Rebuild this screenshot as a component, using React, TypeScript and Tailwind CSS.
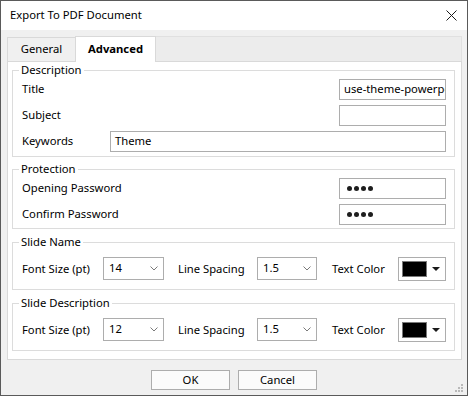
import React from 'react';

const font = { fontFamily: '"Segoe UI", "Noto Sans", "DejaVu Sans", sans-serif' };

function Chevron() {
  return (
    <svg width="8" height="5" viewBox="0 0 8 5" className="shrink-0">
      <path d="M0.5 0.5 L4 4 L7.5 0.5" fill="none" stroke="#7a7a7a" strokeWidth="1" />
    </svg>
  );
}

function Select({ value, width }: { value: string; width: string }) {
  return (
    <div className={`${width} h-[23px] border border-[#adadad] bg-white flex items-center justify-between pl-[5px] pr-[5px]`}>
      <span>{value}</span>
      <Chevron />
    </div>
  );
}

function ColorButton() {
  return (
    <div className="w-[48px] h-[24px] border border-[#adadad] bg-white flex items-center pl-[3px] gap-[5px]">
      <div className="w-[25px] h-[16px] bg-black border border-[#7a7a7a]" />
      <svg width="8" height="4" viewBox="0 0 8 4">
        <path d="M0 0 H8 L4 4 Z" fill="#1a1a1a" />
      </svg>
    </div>
  );
}

function TextBox({ value, width, children }: { value?: string; width: string; children?: React.ReactNode }) {
  return (
    <div className={`${width} h-[21px] border border-[#adadad] bg-white flex items-center pl-[4px] overflow-hidden whitespace-nowrap`}>
      {value}
      {children}
    </div>
  );
}

function Dots() {
  return (
    <div className="flex gap-[2px] pl-[3px]">
      {[0, 1, 2, 3].map((i) => (
        <span key={i} className="w-[5px] h-[5px] rounded-full bg-[#1e1e1e]" />
      ))}
    </div>
  );
}

function Group({ title, className, children }: { title: string; className: string; children: React.ReactNode }) {
  return (
    <fieldset className={`border border-[#dcdcdc] ml-[4px] w-[443px] pl-[9px] pr-[8px] ${className}`}>
      <legend className="-ml-[3px] px-[2px] leading-[16px]">{title}</legend>
      {children}
    </fieldset>
  );
}

function StyleRow({ size, className }: { size: string; className: string }) {
  return (
    <div className={`flex items-start h-[24px] ${className}`}>
      <span className="w-[81px] leading-[23px]">Font Size (pt)</span>
      <Select value={size} width="w-[61px]" />
      <span className="ml-[14px] w-[79px] leading-[23px]">Line Spacing</span>
      <Select value="1.5" width="w-[60px]" />
      <span className="ml-[15px] w-[66px] leading-[23px]">Text Color</span>
      <ColorButton />
    </div>
  );
}

export default function App() {
  return (
    <div className="relative w-[468px] h-[396px] border border-[#5a5a5a] bg-[#f0f0f0] text-[11.25px] text-black flex flex-col" style={font}>
      {/* title bar */}
      <div className="h-[29px] bg-white flex items-center justify-between pl-[9px] pr-[10px]">
        <span>Export To PDF Document</span>
        <svg width="11" height="11" viewBox="0 0 11 11">
          <path d="M0.5 0.5 L10.5 10.5 M10.5 0.5 L0.5 10.5" stroke="#1a1a1a" strokeWidth="1" />
        </svg>
      </div>

      {/* tabs */}
      <div className="ml-[6px] mt-[6px] w-[455px]">
        <div className="flex items-end h-[25px]">
          <div className="w-[69px] h-[24px] border border-b-0 border-[#d9d9d9] bg-[#f0f0f0] flex items-center justify-center">
            General
          </div>
          <div className="relative z-10 -ml-px -mb-px w-[81px] h-[26px] border border-b-0 border-[#d9d9d9] bg-white flex items-center justify-center font-bold">
            Advanced
          </div>
          <div className="flex-1 h-[25px] border-t border-r border-[#e0e0e0] bg-[#ececec]" />
        </div>
        <div className="h-[299px] border border-[#d9d9d9] bg-white">
          <Group title="Description" className="pb-[4px]">
            <div className="flex flex-col gap-[5px] mt-[1px]">
              <div className="flex items-center h-[21px]">
                <span>Title</span>
                <TextBox value="use-theme-powerpoint-template" width="ml-auto w-[107px]" />
              </div>
              <div className="flex items-center h-[21px]">
                <span>Subject</span>
                <TextBox width="ml-auto w-[107px]" />
              </div>
              <div className="flex items-center h-[21px]">
                <span className="w-[88px]">Keywords</span>
                <TextBox value="Theme" width="flex-1" />
              </div>
            </div>
          </Group>

          <Group title="Protection" className="mt-[4px] pb-[3px]">
            <div className="flex flex-col gap-[5px] mt-[1px]">
              <div className="flex items-center h-[21px]">
                <span>Opening Password</span>
                <TextBox width="ml-auto w-[107px]">
                  <Dots />
                </TextBox>
              </div>
              <div className="flex items-center h-[21px]">
                <span>Confirm Password</span>
                <TextBox width="ml-auto w-[107px]">
                  <Dots />
                </TextBox>
              </div>
            </div>
          </Group>

          <Group title="Slide Name" className="mt-[5px] pb-[8px]">
            <StyleRow size="14" className="mt-[7px]" />
          </Group>

          <Group title="Slide Description" className="mt-[5px] pb-[8px]">
            <StyleRow size="12" className="mt-[7px]" />
          </Group>
        </div>
      </div>

      {/* buttons */}
      <div className="flex justify-center gap-[8px] mt-[10px]">
        <button className="w-[79px] h-[20px] border border-[#adadad] bg-[#fbfbfb] leading-none">OK</button>
        <button className="w-[79px] h-[20px] border border-[#adadad] bg-[#fbfbfb] leading-none">Cancel</button>
      </div>

      {/* size grip */}
      <svg className="absolute right-[3px] bottom-[2px]" width="9" height="9" viewBox="0 0 9 9">
        <rect x="6" y="0" width="2" height="2" fill="#b9b9b9" />
        <rect x="3" y="3" width="2" height="2" fill="#b9b9b9" />
        <rect x="6" y="3" width="2" height="2" fill="#b9b9b9" />
        <rect x="0" y="6" width="2" height="2" fill="#b9b9b9" />
        <rect x="3" y="6" width="2" height="2" fill="#b9b9b9" />
        <rect x="6" y="6" width="2" height="2" fill="#b9b9b9" />
      </svg>
    </div>
  );
}
